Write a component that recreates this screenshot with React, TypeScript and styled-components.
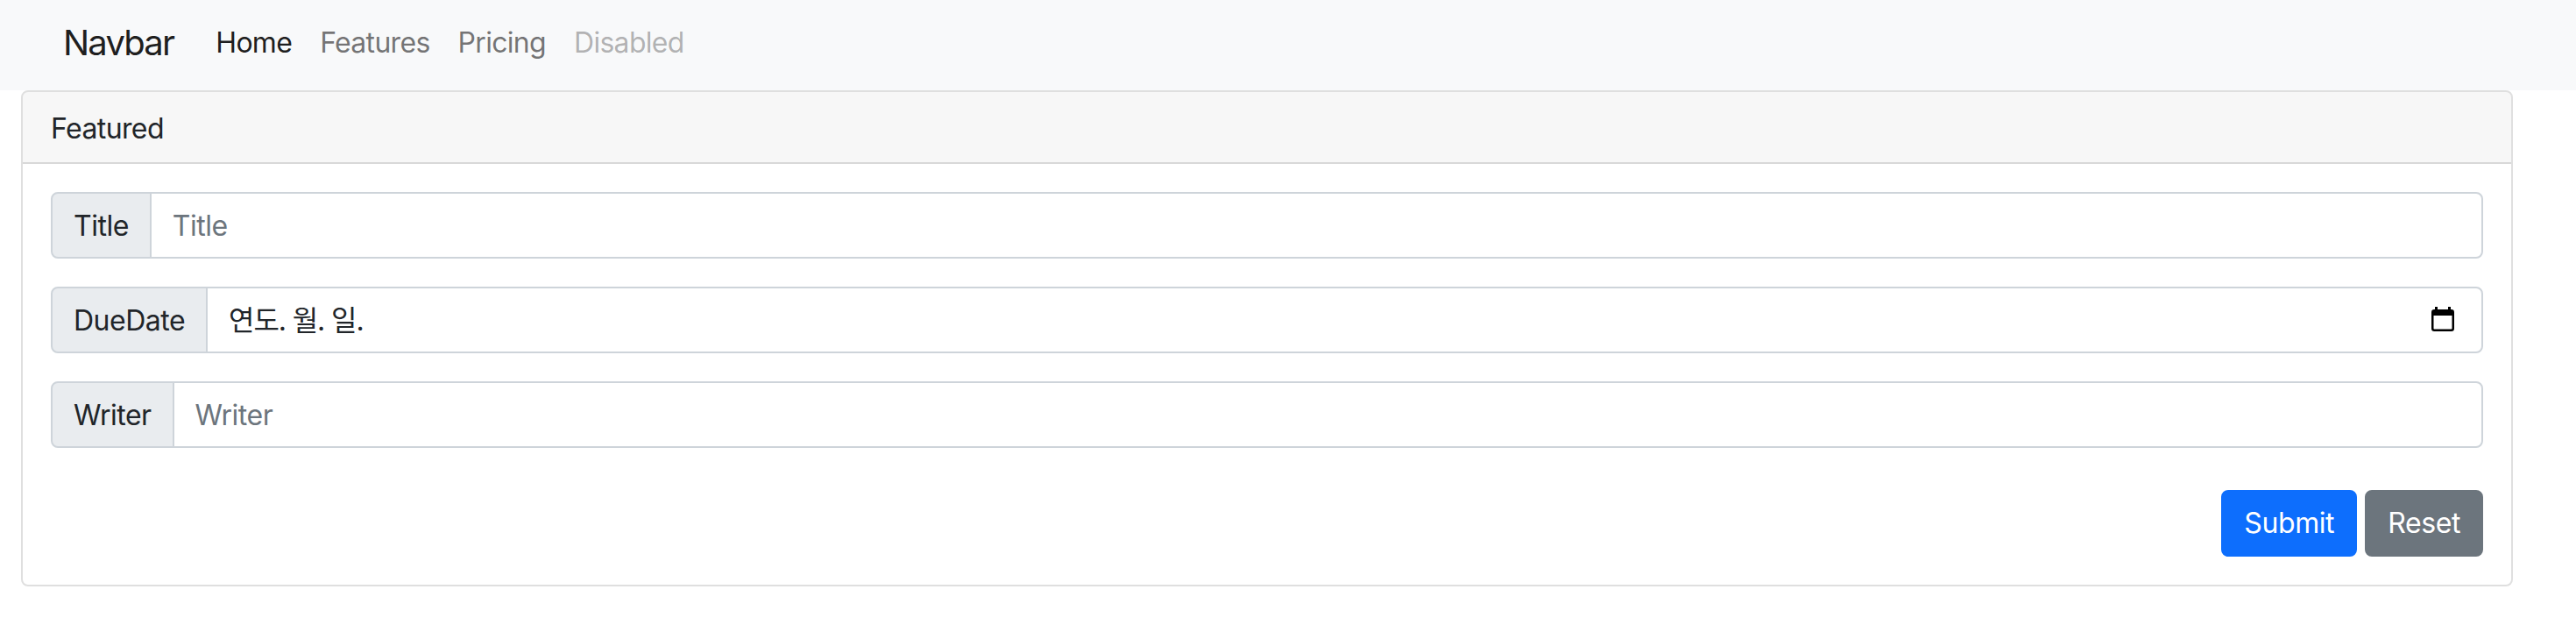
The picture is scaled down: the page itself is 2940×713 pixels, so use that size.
import styled, { createGlobalStyle } from "styled-components";

const Global = createGlobalStyle`
  * {
    box-sizing: border-box;
  }
  body {
    margin: 0;
    background: #fff;
    color: #212529;
    font-family: Inter, "Liberation Sans", "Noto Sans CJK KR", sans-serif;
    font-size: 32px;
    line-height: 48px;
  }
`;

const Nav = styled.nav`
  display: flex;
  align-items: center;
  height: 103px;
  padding: 0 72px 6px;
  background: #f8f9fa;
`;
const Brand = styled.a`
  margin-right: 32px;
  color: rgba(0, 0, 0, 0.9);
  font-size: 40px;
  line-height: 60px;
  letter-spacing: -1.8px;
`;
const NavLink = styled.a<{ $state?: "active" | "disabled" }>`
  padding: 0 16px;
  letter-spacing: -0.7px;
  color: ${(p) =>
    p.$state === "active"
      ? "rgba(0, 0, 0, 0.9)"
      : p.$state === "disabled"
        ? "rgba(0, 0, 0, 0.3)"
        : "rgba(0, 0, 0, 0.55)"};
`;

const Card = styled.section`
  width: 2844px;
  height: 566px;
  margin-left: 24px;
  border: 2px solid rgba(0, 0, 0, 0.125);
  border-radius: 8px;
  overflow: hidden;
`;
const CardHeader = styled.div`
  height: 82px;
  padding: 18px 32px 14px;
  background: rgba(0, 0, 0, 0.03);
  border-bottom: 2px solid rgba(0, 0, 0, 0.125);
  letter-spacing: -0.6px;
`;
const CardBody = styled.form`
  display: flex;
  flex-direction: column;
  gap: 32px;
  padding: 32px;
`;
const Group = styled.div`
  display: flex;
  height: 76px;
`;
const Addon = styled.label`
  display: flex;
  align-items: center;
  padding: 2px 24px 0;
  background: #e9ecef;
  border: 2px solid #ced4da;
  border-radius: 8px 0 0 8px;
  letter-spacing: -0.5px;
`;
const Input = styled.input`
  flex: 1;
  min-width: 0;
  margin-left: -2px;
  padding: 2px 24px 0;
  border: 2px solid #ced4da;
  border-radius: 0 8px 8px 0;
  outline: none;
  color: #212529;
  font: inherit;
  letter-spacing: -0.5px;
  &::placeholder {
    color: #6c757d;
    opacity: 1;
  }
`;
const DateField = styled.div`
  flex: 1;
  display: flex;
  align-items: center;
  justify-content: space-between;
  margin-left: -2px;
  padding: 2px 31px 0 24px;
  border: 2px solid #ced4da;
  border-radius: 0 8px 8px 0;
  letter-spacing: -1.1px;
`;
const CalendarIcon = styled.svg`
  display: block;
  margin-top: -4px;
`;
const Actions = styled.div`
  display: flex;
  justify-content: flex-end;
  gap: 9px;
  margin-top: 16px;
`;
const Button = styled.button<{ $variant: "primary" | "secondary" }>`
  height: 76px;
  padding: 0 24px;
  border: 2px solid ${(p) => (p.$variant === "primary" ? "#0d6efd" : "#6c757d")};
  border-radius: 8px;
  background: ${(p) => (p.$variant === "primary" ? "#0d6efd" : "#6c757d")};
  color: #fff;
  font: inherit;
  letter-spacing: -0.4px;
`;

export default function App() {
  return (
    <>
      <Global />
      <Nav>
        <Brand>Navbar</Brand>
        <NavLink $state="active">Home</NavLink>
        <NavLink>Features</NavLink>
        <NavLink>Pricing</NavLink>
        <NavLink $state="disabled">Disabled</NavLink>
      </Nav>
      <Card>
        <CardHeader>Featured</CardHeader>
        <CardBody>
          <Group>
            <Addon>Title</Addon>
            <Input placeholder="Title" />
          </Group>
          <Group>
            <Addon>DueDate</Addon>
            <DateField>
              <span>연도. 월. 일.</span>
              <CalendarIcon width="26" height="28" viewBox="0 0 26 28">
                <path d="M4 0h3v4H4zM19 0h3v4h-3z" fill="#000" />
                <rect x="1.25" y="4.25" width="23.5" height="22.5" rx="2" fill="none" stroke="#000" strokeWidth="2.5" />
                <rect x="1" y="4" width="24" height="6" fill="#000" />
              </CalendarIcon>
            </DateField>
          </Group>
          <Group>
            <Addon>Writer</Addon>
            <Input placeholder="Writer" />
          </Group>
          <Actions>
            <Button $variant="primary" type="button">Submit</Button>
            <Button $variant="secondary" type="button">Reset</Button>
          </Actions>
        </CardBody>
      </Card>
    </>
  );
}
